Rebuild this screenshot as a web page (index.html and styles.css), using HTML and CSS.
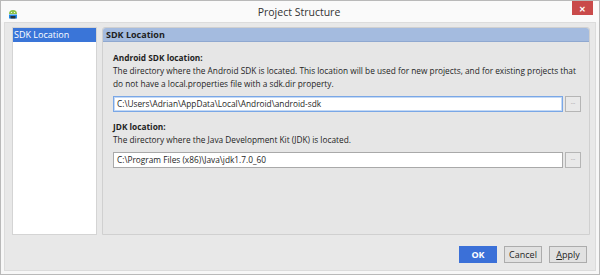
FILE: index.html
```html
<!DOCTYPE html>
<html lang="en">
<head>
    <meta charset="UTF-8">
    <title>Project Structure</title>
    <link rel="stylesheet" href="styles.css">
</head>
<body>
    <div class="window">
        <div class="titlebar">
            <svg class="app-icon" width="12" height="12" viewBox="0 0 12 12">
                <path d="M2 6 A4 4 0 0 1 10 6 Z" fill="#8bc34a"/>
                <rect x="2" y="6.5" width="8" height="4" fill="#1e88e5"/>
                <rect x="3.5" y="8" width="5" height="2.5" fill="#263238"/>
                <circle cx="4.5" cy="4.5" r="0.6" fill="#fff"/>
                <circle cx="7.5" cy="4.5" r="0.6" fill="#fff"/>
            </svg>
            <div class="title">Project Structure</div>
            <div class="close">&#x2715;</div>
        </div>
        <div class="client">
            <div class="main">
                <div class="sidebar">
                    <div class="nav-item selected">SDK Location</div>
                </div>
                <div class="panel">
                    <div class="panel-header">SDK Location</div>
                    <div class="panel-body">
                        <div class="field">
                            <div class="label">Android SDK location:</div>
                            <div class="hint">The directory where the Android SDK is located. This location will be used for new projects, and for existing projects that do not have a local.properties file with a sdk.dir property.</div>
                            <div class="input-row">
                                <div class="input focused">C:\Users\Adrian\AppData\Local\Android\android-sdk</div>
                                <div class="browse">...</div>
                            </div>
                        </div>
                        <div class="field">
                            <div class="label">JDK location:</div>
                            <div class="hint">The directory where the Java Development Kit (JDK) is located.</div>
                            <div class="input-row">
                                <div class="input">C:\Program Files (x86)\Java\jdk1.7.0_60</div>
                                <div class="browse">...</div>
                            </div>
                        </div>
                    </div>
                </div>
            </div>
            <div class="buttons">
                <div class="btn primary">OK</div>
                <div class="btn">Cancel</div>
                <div class="btn"><u>A</u>pply</div>
            </div>
        </div>
    </div>
</body>
</html>
```

FILE: styles.css
```css
body {
    margin: 0;
    padding: 0;
    background-color: #fff;
    font-family: "Open Sans", "Noto Sans", sans-serif;
    font-size: 8.3px;
    color: #1e1e1e;
}
.window {
    width: 600px;
    height: 275px;
    box-sizing: border-box;
    background-color: #f7f7f7;
    border: 1px solid #b9b9b9;
    display: flex;
    flex-direction: column;
}
.titlebar {
    height: 21px;
    display: flex;
    align-items: center;
    position: relative;
    background-color: #fafafa;
}
.app-icon {
    margin-left: 6px;
    margin-top: 4px;
}
.title {
    flex: 1;
    text-align: center;
    font-size: 10.5px;
    color: #333;
    margin-right: 20px;
}
.close {
    position: absolute;
    right: 6px;
    top: 0;
    width: 21px;
    height: 14px;
    background-color: #c94a4a;
    color: #fff;
    font-size: 8px;
    font-weight: bold;
    display: flex;
    align-items: center;
    justify-content: center;
}
.client {
    flex: 1;
    margin: 0 3px 3px 3px;
    background-color: #e8e8e8;
    border: 1px solid #dcdcdc;
    display: flex;
    flex-direction: column;
}
.main {
    display: flex;
    gap: 5px;
    padding: 4px 5px 0 7px;
    height: 208px;
}
.sidebar {
    width: 83px;
    background-color: #fff;
    border: 1px solid #d4d4d4;
}
.nav-item {
    height: 14px;
    line-height: 14px;
    padding-left: 1px;
    font-size: 9px;
}
.nav-item.selected {
    background-color: #3a75d8;
    color: #fff;
}
.panel {
    flex: 1;
    background-color: #e6e6e6;
    border: 1px solid #d0d0d0;
    border-radius: 3px 3px 0 0;
}
.panel-header {
    height: 13px;
    line-height: 13px;
    background-color: #a4bbdf;
    border-bottom: 1px solid #8fa8d0;
    border-radius: 3px 3px 0 0;
    padding-left: 3px;
    font-weight: bold;
    font-size: 9px;
}
.panel-body {
    padding: 10px 8px 0 10px;
}
.field {
    margin-bottom: 9px;
}
.label {
    font-weight: bold;
    line-height: 12px;
}
.hint {
    line-height: 13px;
}
.input-row {
    display: flex;
    gap: 2px;
    margin-top: 6px;
}
.input {
    flex: 1;
    height: 14px;
    line-height: 14px;
    background-color: #fff;
    border: 1px solid #a9a9a9;
    padding-left: 3px;
}
.input.focused {
    border-color: #7aa7e6;
    box-shadow: inset 0 0 0 1px #c4d9f5;
}
.browse {
    width: 14px;
    height: 14px;
    border: 1px solid #b5b5b5;
    background-color: #e9e9e9;
    color: #888;
    font-size: 6px;
    text-align: center;
    line-height: 10px;
}
.buttons {
    display: flex;
    justify-content: flex-end;
    gap: 7px;
    padding: 11px 8px 0 0;
}
.btn {
    width: 36px;
    height: 15px;
    line-height: 15px;
    text-align: center;
    border: 1px solid #acacac;
    background-color: #e1e1e1;
    font-size: 9px;
}
.btn.primary {
    background-color: #3b70d8;
    border-color: #3b70d8;
    color: #fff;
    font-weight: bold;
}
```
